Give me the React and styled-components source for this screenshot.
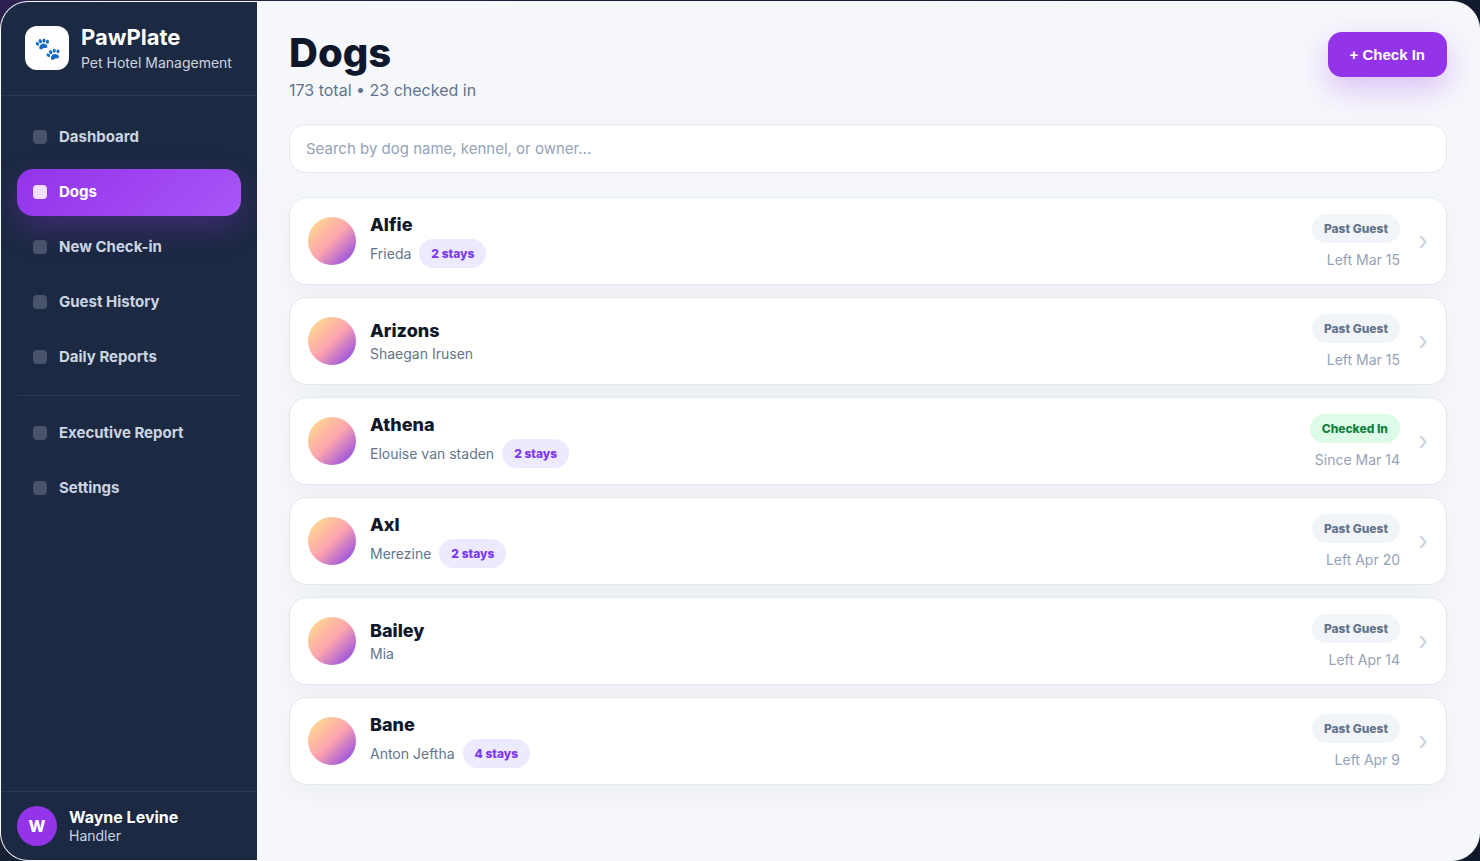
import React from 'react';
import styled, { createGlobalStyle, css } from 'styled-components';

const mainLinks = ['Dashboard', 'Dogs', 'New Check-in', 'Guest History', 'Daily Reports'];
const moreLinks = ['Executive Report', 'Settings'];

const dogs = [
    { name: 'Alfie', owner: 'Frieda', stays: 2, date: 'Left Mar 15' },
    { name: 'Arizons', owner: 'Shaegan Irusen', date: 'Left Mar 15' },
    { name: 'Athena', owner: 'Elouise van staden', stays: 2, checkedIn: true, date: 'Since Mar 14' },
    { name: 'Axl', owner: 'Merezine', stays: 2, date: 'Left Apr 20' },
    { name: 'Bailey', owner: 'Mia', date: 'Left Apr 14' },
    { name: 'Bane', owner: 'Anton Jeftha', stays: 4, date: 'Left Apr 9' },
];

const NavItem = ({ label }) => (
    <NavLink href="#" $active={label === 'Dogs'} aria-current={label === 'Dogs' ? 'page' : undefined}>
        <NavIcon $active={label === 'Dogs'} />
        {label}
    </NavLink>
);

const DogRow = ({ dog }) => (
    <Card href="#">
        <DogPhoto />
        <DogInfo>
            <DogName>{dog.name}</DogName>
            <Owner>
                {dog.owner}
                {dog.stays && <Pill $tone="purple">{dog.stays} stays</Pill>}
            </Owner>
        </DogInfo>
        <Status>
            <Pill $tone={dog.checkedIn ? 'green' : 'grey'}>
                {dog.checkedIn ? 'Checked In' : 'Past Guest'}
            </Pill>
            <StatusDate>{dog.date}</StatusDate>
        </Status>
        <Chevron>›</Chevron>
    </Card>
);

const App = () => {
    return (
        <>
            <GlobalStyle />
            <Frame>
                <Sidebar>
                    <Brand>
                        <Logo>🐾</Logo>
                        <div>
                            <BrandName>PawPlate</BrandName>
                            <BrandText>Pet Hotel Management</BrandText>
                        </div>
                    </Brand>

                    <Nav>
                        {mainLinks.map((label) => <NavItem key={label} label={label} />)}
                        <Divider />
                        {moreLinks.map((label) => <NavItem key={label} label={label} />)}
                    </Nav>

                    <User>
                        <Avatar>W</Avatar>
                        <div>
                            <UserName>Wayne Levine</UserName>
                            <UserRole>Handler</UserRole>
                        </div>
                    </User>
                </Sidebar>

                <Main>
                    <Header>
                        <div>
                            <Title>Dogs</Title>
                            <Subtitle>173 total • 23 checked in</Subtitle>
                        </div>
                        <CheckInButton type="button">+ Check In</CheckInButton>
                    </Header>

                    <Search type="search" aria-label="Search dogs" placeholder="Search by dog name, kennel, or owner..." />

                    <List>
                        {dogs.map((dog) => <DogRow key={dog.name} dog={dog} />)}
                    </List>
                </Main>
            </Frame>
        </>
    )
}


const GlobalStyle = createGlobalStyle`
    * {
        box-sizing: border-box;
    }

    body {
        margin: 0;
        padding-top: 1px;
        min-height: 100vh;
        font-family: Inter, sans-serif;
        color: #0f172a;
        background: radial-gradient(circle at top left, #2c2150 0, #1a2238 30%, #0f172a 100%);
    }

    a {
        color: inherit;
        text-decoration: none;
    }
`

const Frame = styled.div`
    display: flex;
    min-height: calc(100vh - 1px);
    overflow: hidden;
    border: 1px solid #f6f7fb;
    border-radius: 28px;
    background: #f6f7fb;
`

const Sidebar = styled.aside`
    display: flex;
    flex-direction: column;
    flex: 0 0 256px;
    color: white;
    background: #1c2942;
`

const Brand = styled.div`
    display: flex;
    align-items: flex-start;
    gap: 12px;
    padding: 24px;
    border-bottom: 1px solid #2d3954;
`

const Logo = styled.div`
    display: grid;
    place-items: center;
    width: 44px;
    height: 44px;
    border-radius: 12px;
    font-size: 22px;
    line-height: 26px;
    background: white;
`

const BrandName = styled.div`
    font-size: 22px;
    font-weight: 700;
    line-height: 22px;
`

const BrandText = styled.div`
    margin-top: 6px;
    font-size: 14px;
    line-height: 17px;
    color: #cbd5e1;
    white-space: nowrap;
`

const Nav = styled.nav`
    display: flex;
    flex-direction: column;
    flex: 1;
    gap: 8px;
    padding: 18px 16px;
`

const NavLink = styled.a`
    display: flex;
    align-items: center;
    gap: 12px;
    padding: 13px 16px 14px;
    border-radius: 16px;
    font-size: 15px;
    font-weight: 700;
    line-height: 20px;
    color: #cbd5e1;

    ${({ $active }) => $active && css`
        color: white;
        background: linear-gradient(135deg, #9333ea, #a855f7);
        box-shadow: 0 12px 30px rgba(147, 51, 234, 0.28);
    `}
`

const NavIcon = styled.span`
    width: 14px;
    height: 14px;
    border-radius: 4px;
    background: ${({ $active }) => $active ? 'rgba(255, 255, 255, 0.85)' : '#49546c'};
`

const Divider = styled.hr`
    width: 100%;
    height: 1px;
    margin: 6px 0;
    border: 0;
    background: #2d3954;
`

const User = styled.div`
    display: flex;
    align-items: center;
    gap: 12px;
    padding: 14px 16px;
    border-top: 1px solid #2d3954;
`

const Avatar = styled.div`
    display: grid;
    place-items: center;
    width: 40px;
    height: 40px;
    border-radius: 50%;
    font-size: 16px;
    font-weight: 800;
    background: #9333ea;
`

const UserName = styled.div`
    font-size: 16px;
    font-weight: 700;
    line-height: 19px;
`

const UserRole = styled.div`
    font-size: 14px;
    line-height: 17px;
    color: #cbd5e1;
`

const Main = styled.main`
    flex: 1;
    min-width: 0;
    padding: 30px 32px;
`

const Header = styled.header`
    display: flex;
    align-items: flex-start;
    justify-content: space-between;
    margin-bottom: 24px;
`

const Title = styled.h1`
    margin: 0;
    font-size: 40px;
    font-weight: 800;
    line-height: 42px;
`

const Subtitle = styled.p`
    margin: 6px 0 0;
    font-size: 16px;
    line-height: 20px;
    color: #64748b;
`

const CheckInButton = styled.button`
    height: 45px;
    padding: 0 22px;
    border: 0;
    border-radius: 14px;
    font: 700 15px "Liberation Sans", Arial, sans-serif;
    color: white;
    background: #9333ea;
    box-shadow: 0 12px 30px rgba(147, 51, 234, 0.28);
`

const Search = styled.input`
    display: block;
    width: 100%;
    height: 49px;
    padding: 0 16px;
    border: 1px solid #e2e8f0;
    border-radius: 16px;
    font-family: inherit;
    font-size: 15px;
    background: white;
    appearance: none;

    &::placeholder {
        color: #94a3b8;
    }
`

const List = styled.div`
    display: grid;
    gap: 12px;
    margin-top: 24px;
`

const Card = styled.a`
    display: flex;
    align-items: center;
    height: 88px;
    padding: 0 18px;
    border: 1px solid #e2e8f0;
    border-radius: 18px;
    background: white;
    box-shadow: 0 8px 24px rgba(15, 23, 42, 0.04);
`

const DogPhoto = styled.div`
    width: 48px;
    height: 48px;
    border-radius: 50%;
    background: linear-gradient(135deg, #fde68a, #fda4af 50%, #7c3aed);
`

const DogInfo = styled.div`
    flex: 1;
    margin-left: 14px;
`

const DogName = styled.div`
    font-size: 18px;
    font-weight: 800;
    line-height: 22px;
`

const Owner = styled.div`
    display: flex;
    align-items: center;
    gap: 8px;
    margin-top: 3px;
    font-size: 14px;
    line-height: 17px;
    color: #64748b;
`

const tones = {
    purple: css`color: #7c3aed; background: #ede9fe;`,
    green: css`color: #15803d; background: #dcfce7;`,
    grey: css`color: #64748b; background: #f1f5f9;`,
}

const Pill = styled.span`
    padding: 7px 12px;
    border-radius: 999px;
    font-size: 12px;
    font-weight: 800;
    line-height: 15px;
    ${({ $tone }) => tones[$tone]}
`

const Status = styled.div`
    display: flex;
    flex-direction: column;
    align-items: flex-end;
    gap: 8px;
`

const StatusDate = styled.div`
    font-size: 14px;
    line-height: 17px;
    color: #94a3b8;
`

const Chevron = styled.span`
    margin-left: 18px;
    font-size: 26px;
    line-height: 32px;
    color: #cbd5e1;
`


export default App;
